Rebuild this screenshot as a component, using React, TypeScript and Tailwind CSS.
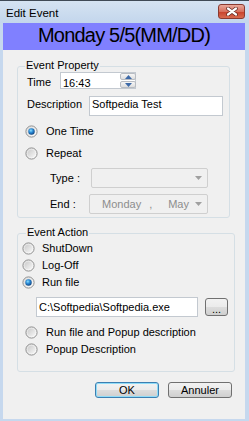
import React from 'react';

// Win7-ish radio drawn as svg
function Radio({ checked = false }: { checked?: boolean }) {
  return (
    <svg width="13" height="13" viewBox="0 0 13 13" className="shrink-0">
      <defs>
        <linearGradient id="rOuter" x1="0" y1="0" x2="1" y2="1">
          <stop offset="0" stopColor="#dcdcdc" />
          <stop offset="1" stopColor="#ffffff" />
        </linearGradient>
        <linearGradient id="rInner" x1="0" y1="0" x2="1" y2="1">
          <stop offset="0" stopColor="#cbcbcb" />
          <stop offset="1" stopColor="#f6f6f6" />
        </linearGradient>
        <radialGradient id="rDot" cx="0.4" cy="0.35" r="0.7">
          <stop offset="0" stopColor="#8ae0ff" />
          <stop offset="0.45" stopColor="#2b8ad6" />
          <stop offset="1" stopColor="#0d3f7a" />
        </radialGradient>
      </defs>
      <circle cx="6.5" cy="6.5" r="5.6" fill="url(#rOuter)" stroke="#8f8f8f" strokeWidth="1" />
      <circle cx="6.5" cy="6.5" r="3.8" fill="url(#rInner)" />
      {checked && <circle cx="6.5" cy="6.5" r="3.2" fill="url(#rDot)" />}
    </svg>
  );
}

function CloseButton() {
  return (
    <div className="ml-auto mt-[3px] mr-[4px] w-[27px] h-[15px] rounded-[3px] border border-[#8a3a30] bg-[linear-gradient(#e9a99b_0%,#d7705e_50%,#c7402b_51%,#d86a4f_100%)] flex items-center justify-center">
      <svg width="12" height="9" viewBox="0 0 12 9">
        <path d="M2 1.5 L10 7.5 M10 1.5 L2 7.5" stroke="#5a2018" strokeWidth="3.6" strokeLinecap="round" />
        <path d="M2 1.5 L10 7.5 M10 1.5 L2 7.5" stroke="#ffffff" strokeWidth="2.2" strokeLinecap="round" />
      </svg>
    </div>
  );
}

function Spinner() {
  return (
    <div className="ml-auto w-[16px] h-[15px] flex flex-col gap-[1px] self-center mr-[-1px]">
      <div className="flex-1 border border-[#b8bcc2] rounded-[2px] bg-[linear-gradient(#f6f6f6,#dedede)] flex items-center justify-center">
        <svg width="7" height="4" viewBox="0 0 7 4">
          <path d="M0 4 L3.5 0 L7 4 Z" fill="#3e6aa8" />
        </svg>
      </div>
      <div className="flex-1 border border-[#b8bcc2] rounded-[2px] bg-[linear-gradient(#f6f6f6,#dedede)] flex items-center justify-center">
        <svg width="7" height="4" viewBox="0 0 7 4">
          <path d="M0 0 L7 0 L3.5 4 Z" fill="#3e6aa8" />
        </svg>
      </div>
    </div>
  );
}

function Arrow() {
  return (
    <svg width="7" height="4" viewBox="0 0 7 4" className="shrink-0">
      <path d="M0 0 L7 0 L3.5 4 Z" fill="#a0a0a0" />
    </svg>
  );
}

export default function App() {
  return (
    <div className="w-[249px] h-[421px] flex flex-col bg-[#c6d8ee] border-t border-[#404a56] font-['Liberation_Sans',Arial,sans-serif] text-[11px] leading-[13px] text-black overflow-hidden">
      {/* title bar */}
      <div className="h-[22px] shrink-0 flex items-start bg-[linear-gradient(#d5e3f2,#c3d6ec)]">
        <span className="ml-[6px] mt-[5px] text-[11.5px] leading-[15px]">Edit Event</span>
        <CloseButton />
      </div>

      <div className="flex-1 ml-[3px] mr-[4px] mb-[2px] bg-[#f0f0f0] flex flex-col">
        {/* banner */}
        <div className="h-[27px] shrink-0 bg-[#8080ff] flex justify-center">
          <span className="text-[20px] leading-[24px] tracking-[-0.8px]">Monday 5/5(MM/DD)</span>
        </div>

        {/* Event Property */}
        <div className="relative mt-[16px] ml-[14px] w-[213px] h-[152px] shrink-0 border border-[#d5dfe5] rounded-[3px] flex flex-col">
          <span className="absolute left-[7px] -top-[8px] px-[1px] bg-[#f0f0f0]">Event Property</span>

          <div className="mt-[5px] h-[17px] flex items-start pl-[9px]">
            <span className="w-[33px] mt-[4px]">Time</span>
            <div className="w-[76px] h-[17px] bg-white border border-[#c3c9d0] flex items-start pl-[2px]">
              <span className="mt-[4px]">16:43</span>
              <Spinner />
            </div>
          </div>

          <div className="mt-[7px] h-[20px] flex items-start pl-[9px]">
            <span className="w-[62px] mt-[2px]">Description</span>
            <div className="w-[134px] h-[20px] bg-white border border-[#c3c9d0] pl-[2px] pt-[1px]">
              <span>Softpedia Test</span>
            </div>
          </div>

          <div className="mt-[9px] h-[13px] flex items-center pl-[7px]">
            <Radio checked />
            <span className="ml-[8px]">One Time</span>
          </div>
          <div className="mt-[9px] h-[13px] flex items-center pl-[7px]">
            <Radio />
            <span className="ml-[8px]">Repeat</span>
          </div>

          <div className="mt-[8px] h-[20px] flex items-center pl-[32px]">
            <span className="w-[41px]">Type :</span>
            <div className="w-[117px] h-[20px] border border-[#cfcfcf] rounded-[2px] flex items-center justify-end pr-[5px]">
              <Arrow />
            </div>
          </div>
          <div className="mt-[6px] h-[20px] flex items-center pl-[32px]">
            <span className="w-[39px]">End :</span>
            <div className="w-[119px] h-[20px] border border-[#cfcfcf] rounded-[2px] flex items-center pl-[12px] pr-[5px] text-[#8d8d8d]">
              <span>Monday</span>
              <span className="ml-[8px]">,</span>
              <span className="ml-[16px]">May</span>
              <span className="ml-auto">
                <Arrow />
              </span>
            </div>
          </div>
        </div>

        {/* Event Action */}
        <div className="relative mt-[15px] ml-[14px] w-[218px] h-[139px] shrink-0 border border-[#d5dfe5] rounded-[3px] flex flex-col">
          <span className="absolute left-[8px] -top-[8px] px-[1px] bg-[#f0f0f0]">Event Action</span>

          <div className="mt-[8px] h-[13px] flex items-center pl-[4px]">
            <Radio />
            <span className="ml-[7px]">ShutDown</span>
          </div>
          <div className="mt-[4px] h-[13px] flex items-center pl-[4px]">
            <Radio />
            <span className="ml-[7px]">Log-Off</span>
          </div>
          <div className="mt-[4px] h-[13px] flex items-center pl-[4px]">
            <Radio checked />
            <span className="ml-[7px]">Run file</span>
          </div>

          <div className="mt-[8px] h-[20px] flex items-start pl-[18px]">
            <div className="w-[162px] h-[20px] bg-white border border-[#c3c9d0] flex items-center pl-[2px]">
              <span>C:\Softpedia\Softpedia.exe</span>
            </div>
            <div className="ml-[7px] mt-[1px] w-[23px] h-[18px] rounded-[3px] border border-[#707070] bg-[linear-gradient(#f2f2f2_0%,#ebebeb_50%,#dddddd_50%,#cfcfcf_100%)] flex items-end justify-center pb-[2px] leading-[8px]">
              ...
            </div>
          </div>

          <div className="mt-[9px] h-[13px] flex items-center pl-[7px]">
            <Radio />
            <span className="ml-[8px]">Run file and Popup description</span>
          </div>
          <div className="mt-[4px] h-[13px] flex items-center pl-[7px]">
            <Radio />
            <span className="ml-[8px]">Popup Description</span>
          </div>
        </div>

        {/* buttons */}
        <div className="mt-[10px] flex justify-end gap-[9px] mr-[13px]">
          <div className="w-[64px] h-[16px] rounded-[3px] border border-[#3c7fb1] shadow-[inset_0_0_0_1px_#8fdcf8] bg-[linear-gradient(#f2f2f2_0%,#ebebeb_50%,#dddddd_50%,#cfcfcf_100%)] flex items-center justify-center">
            OK
          </div>
          <div className="w-[64px] h-[16px] rounded-[3px] border border-[#707070] bg-[linear-gradient(#f2f2f2_0%,#ebebeb_50%,#dddddd_50%,#cfcfcf_100%)] flex items-center justify-center">
            Annuler
          </div>
        </div>
      </div>
    </div>
  );
}
